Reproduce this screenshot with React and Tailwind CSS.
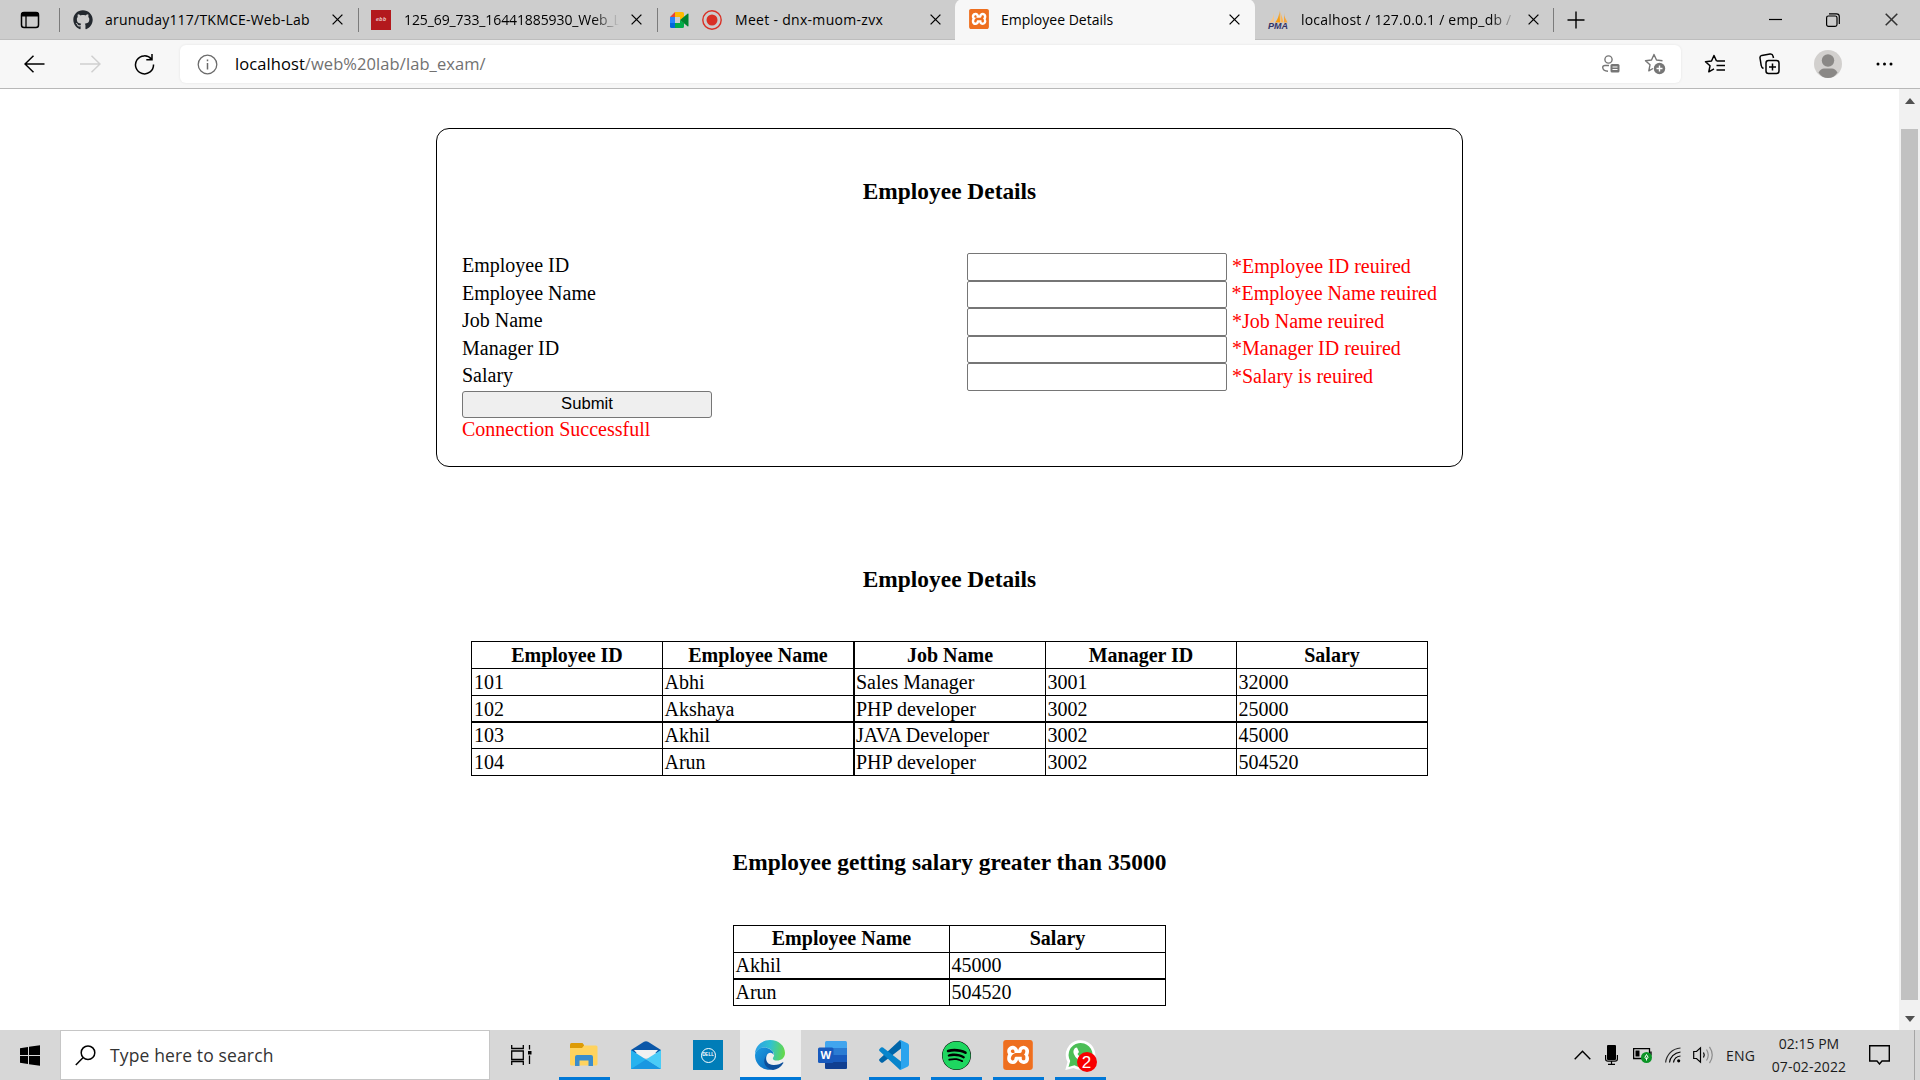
import React from "react";
import { FaGithub, FaSpotify } from "react-icons/fa";
import { SiXampp } from "react-icons/si";

const Svg = ({ w = 20, h = 20, className = "", children, vb }) => (
  <svg width={w} height={h} viewBox={vb || `0 0 ${w} ${h}`} fill="none" stroke="currentColor" className={`block shrink-0 ${className}`}>
    {children}
  </svg>
);

const Close = ({ s = 11, className = "" }) => (
  <Svg w={s} h={s} vb="0 0 11 11" className={className}>
    <path d="M.6 .6L10.4 10.4M10.4 .6L.6 10.4" strokeWidth="1.3" />
  </Svg>
);

const Xampp = ({ big }) => (
  <span className={big ? "block rounded-[5px] bg-white" : "block rounded-[3px] bg-white"}>
    <SiXampp size={big ? 30 : 20} color="#ee6f1f" className="block" />
  </span>
);

const MeetIcon = () => (
  <Svg w={19} h={16} className="mt-px">
    <g stroke="none">
      <path d="M0 5L5 0V5Z" fill="#e94335" />
      <path d="M5 0H12.500Q14 0 14 1.500V5L10 8V5H5Z" fill="#ffba00" />
      <path d="M0 5H5V11H0Z" fill="#2684fc" />
      <path d="M0 11H5V16H1.500Q0 16 0 14.500Z" fill="#0066da" />
      <path d="M5 11H10V8L14 11V14.500Q14 16 12.500 16H5Z" fill="#00ac47" />
      <path d="M10 8L17.500 1.800Q18.500 1.200 18.500 2.500V13.500Q18.500 14.800 17.500 14.200Z" fill="#00832d" />
    </g>
  </Svg>
);

const Pma = () => (
  <span className="flex h-5 w-5 flex-col items-center">
    <Svg w={20} h={13}>
      <g stroke="none">
        <path d="M6 2C6 7 4 10 1 12.500H6Z" fill="#f5c78d" />
        <path d="M11.500 0C11.500 5 9.500 10 7 12.500H12Z" fill="#f89c0e" />
        <path d="M12.500 1C13 6 15 8 15.500 12.500H12.500Z" fill="#fbb75a" />
        <path d="M16 3C16 7 18 9 19.500 12.500H16Z" fill="#f6a63a" />
      </g>
    </Svg>
    <span className="font-['Liberation_Sans'] text-[9px] leading-[7px] font-bold text-[#333366] italic">PMA</span>
  </span>
);

const Tab = ({ icon, title, active, sep, fade, first, track = "tracking-[-0.1px]" }) => (
  <div className={`flex h-10 w-[299px] shrink-0 items-center ${active ? "z-10 -ml-px h-[41px] w-[300px] rounded-t-lg bg-[#f7f7f7] pb-px" : ""}`}>
    <span className={`h-6 w-px shrink-0 ${sep ? "bg-[#7b7b7b]" : ""}`} />
    <span className={`flex shrink-0 items-center ${first || active ? "ml-[13px]" : "ml-3"}`}>{icon}</span>
    <span className={`flex-1 overflow-hidden text-[14px] whitespace-nowrap ${track} ${first || active ? "ml-3" : "ml-[13px]"} ${fade ? "[mask-image:linear-gradient(to_right,#000_88%,transparent)]" : ""}`}>{title}</span>
    <Close className={fade ? "mr-[15px] ml-3" : "mr-[15px]"} />
  </div>
);

function Browser() {
  return (
    <header className="font-['Open_Sans',sans-serif] text-black">
      <div className="flex h-10 items-center border-b border-[#bdbdbd] bg-[#cdcdcd]">
        <div className="flex w-[59px] justify-center">
          <Svg w={20} h={20}>
            <rect x="1.500" y="2.500" width="17" height="15" rx="2.500" strokeWidth="1.500" />
            <path d="M1.500 6V4.500Q1.500 2.500 3.500 2.500H16.500Q18.500 2.500 18.500 4.500V6Z" fill="currentColor" />
            <path d="M6 6V17.500" strokeWidth="1.300" />
          </Svg>
        </div>
        <Tab sep first track="tracking-[0.22px]" icon={<FaGithub size={20} color="#24292f" />} title="arunuday117/TKMCE-Web-Lab" />
        <Tab sep fade icon={<span className="flex h-5 w-5 items-center justify-center bg-[#b3191d] text-[6px] font-bold text-[#e3b5b5] italic">ebb</span>} title="125_69_733_16441885930_Web_L" />
        <Tab
          sep
          track="tracking-[0.3px]"
          icon={
            <span className="flex items-center gap-3.5">
              <MeetIcon />
              <Svg w={20} h={20} className="-ml-px text-[#d93025]"><circle cx="10" cy="10" r="9.200" strokeWidth="1.400" /><circle cx="10" cy="10" r="5.500" fill="currentColor" stroke="none" /></Svg>
            </span>
          }
          title="Meet - dnx-muom-zvx"
        />
        <Tab active track="tracking-normal" icon={<Xampp />} title="Employee Details" />
        <Tab fade track="tracking-[0.2px]" icon={<Pma />} title="localhost / 127.0.0.1 / emp_db / e" />
        <span className="-ml-px h-6 w-px bg-[#7b7b7b]" />
        <Svg w={18} h={18} className="ml-[13px]"><path d="M9 .5V17.500M.5 9H17.500" strokeWidth="1.400" /></Svg>
        <div className="ml-auto flex items-center">
          <Svg w={13} h={13} className="mr-[44px]"><path d="M0 6.500H13" strokeWidth="1.200" /></Svg>
          <Svg w={14} h={14} className="mr-[45px]"><rect x=".6" y="3" width="10.400" height="10.400" rx="1.800" strokeWidth="1.200" /><path d="M3 .8H10.500Q13.300 .8 13.300 3.600V11" strokeWidth="1.200" /></Svg>
          <Close s={13} className="mr-[22px] opacity-75" />
        </div>
      </div>
      <div className="flex h-[49px] items-center border-b border-[#b8b8b8] bg-[#f7f7f7]">
        <Svg w={21} h={18} className="ml-6"><path d="M20.500 9H1M9.500 .8L1 9L9.500 17.200" strokeWidth="1.500" /></Svg>
        <Svg w={21} h={18} className="ml-[35px] text-[#d0d0d0]"><path d="M0 9H19.500M11.500 .8L20 9L11.500 17.200" strokeWidth="1.500" /></Svg>
        <Svg w={21} h={21} className="ml-[33px]"><path d="M17.500 5.200A9 9 0 1 0 19.500 10.500M18 0V5.700H12.300" strokeWidth="1.500" /></Svg>
        <div className="ml-[25px] flex h-[38px] w-[1501px] items-center rounded-md bg-white shadow-[0_0_3px_rgba(0,0,0,0.08)]">
          <Svg w={21} h={21} className="ml-[17px] text-[#6b6b6b]"><circle cx="10.500" cy="10.500" r="9.300" strokeWidth="1.300" /><path d="M10.500 9V15.500M10.500 5.500V7.200" strokeWidth="1.500" /></Svg>
          <span className="ml-[17px] text-[16.5px] tracking-[0.08px] text-[#717171]"><span className="text-black">localhost</span>/web%20lab/lab_exam/</span>
          <Svg w={20} h={20} className="ml-auto text-[#767676]">
            <circle cx="7.500" cy="5.500" r="3.600" strokeWidth="1.400" />
            <path d="M8 11.500H4Q1.700 11.500 1.700 13.500Q2 17 7 17.300" strokeWidth="1.400" />
            <rect x="9.500" y="10" width="9" height="8.500" rx="1.500" fill="currentColor" stroke="none" />
            <path d="M11.500 13H16.500M11.500 15.500H16.500" stroke="#fff" strokeWidth="1.100" />
          </Svg>
          <Svg w={22} h={22} className="mr-[15px] ml-[23px] text-[#767676]">
            <path d="M18.500 7.700L12.500 7L10 1.500L7.500 7L1.500 7.700L6 11.800L4.800 17.800L9 15.500" strokeWidth="1.400" strokeLinejoin="round" />
            <circle cx="15.500" cy="15.500" r="5.700" fill="currentColor" stroke="none" />
            <path d="M15.500 12.500V18.500M12.500 15.500H18.500" stroke="#fff" strokeWidth="1.400" />
          </Svg>
        </div>
        <Svg w={22} h={20} className="ml-[23px]"><path d="M12.500 7L10 1.500L7.500 7L1.500 7.700L6 11.800L4.800 17.800L10 14.800" strokeWidth="1.500" strokeLinejoin="round" /><path d="M12.500 7H21M12.500 11.500H21M12.500 16H21" strokeWidth="1.500" /></Svg>
        <Svg w={21} h={22} className="ml-[33px]"><rect x="7" y="7.500" width="13" height="13" rx="2.500" strokeWidth="1.500" /><path d="M13.500 10.500V17.500M10 14H17" strokeWidth="1.500" /><path d="M4.500 15.500Q2.500 14.500 2.200 12.500L1 5Q.8 3 2.800 2.400L11 1Q13.500 .7 14 3L14.500 5" strokeWidth="1.500" /></Svg>
        <Svg w={28} h={28} className="ml-[34px]"><circle cx="14" cy="14" r="14" fill="#d2d0ce" stroke="none" /><circle cx="14" cy="10.500" r="6.200" fill="#8a8886" stroke="none" /><path d="M4.500 22.500Q7 18.500 10 18.500H18Q21 18.500 23.500 22.500Q20 28 14 28Q8 28 4.500 22.500Z" fill="#8a8886" stroke="none" /></Svg>
        <Svg w={17} h={4} className="ml-[34px]"><g fill="currentColor" stroke="none"><circle cx="2" cy="2" r="1.500" /><circle cx="8.500" cy="2" r="1.500" /><circle cx="15" cy="2" r="1.500" /></g></Svg>
      </div>
    </header>
  );
}

const fields = [
  ["Employee ID", "*Employee ID reuired", "h-[28px]"],
  ["Employee Name", "*Employee Name reuired", "h-[27px]"],
  ["Job Name", "*Job Name reuired", "h-[28px]"],
  ["Manager ID", "*Manager ID reuired", "h-[27px]"],
  ["Salary", "*Salary is reuired", "h-[28px]"],
];

const heads = ["Employee ID", "Employee Name", "Job Name", "Manager ID", "Salary"];
const rows = [
  ["101", "Abhi", "Sales Manager", "3001", "32000"],
  ["102", "Akshaya", "PHP developer", "3002", "25000"],
  ["103", "Akhil", "JAVA Developer", "3002", "45000"],
  ["104", "Arun", "PHP developer", "3002", "504520"],
];
const high = [["Akhil", "45000"], ["Arun", "504520"]];

const Title = ({ children, className }) => (
  <h3 className={`text-center text-[23.4px] leading-[27px] font-bold ${className}`}>{children}</h3>
);

function Page() {
  return (
    <main className="flex h-[941px] bg-white">
      <div className="flex w-[1899px] flex-col items-center font-['Liberation_Serif',serif] text-[20px] leading-[23px] text-black">
        <section className="mt-[39px] h-[339px] w-[1027px] rounded-[13px] border border-black px-[25px]">
          <Title className="mt-[49px] mb-[48px]">Employee Details</Title>
          {fields.map(([label, err, h]) => (
            <div key={label} className={`flex items-center ${h}`}>
              <span className="w-[505px] pb-[3px]">{label}</span>
              <input className="h-full w-[260px] rounded-[2px] border border-[#767676] bg-white" />
              <span className="ml-[5px] pb-[2px] whitespace-nowrap text-[#ff0000]">{err}</span>
            </div>
          ))}
          <button className="block h-[27px] w-[250px] rounded-[3px] border border-[#767676] bg-[#efefef] pb-[2px] font-['Liberation_Sans',sans-serif] text-[16.67px] leading-[23px]">Submit</button>
          <p className="text-[#ff0000]">Connection Successfull</p>
        </section>

        <Title className="mt-[99px]">Employee Details</Title>
        <div className="mt-[48px] grid grid-cols-[191px_191px_192px_191px_192px] grid-rows-[27px_27px_26px_27px_27px] border-b border-black">
          {heads.map((h, i) => (
            <div key={h} className={`border-t border-l border-black pt-[2px] text-center font-bold ${i === 2 ? "border-l-2" : ""} ${i === 4 ? "border-r" : ""}`}>{h}</div>
          ))}
          {rows.map((r, j) =>
            r.map((c, i) => (
              <div key={`${j}-${i}`} className={`border-black ${i === 2 ? "border-l-2 pl-px" : i === 0 ? "border-l pl-[2px]" : "border-l pl-[1.5px]"} ${j === 2 ? "border-t-2 pt-px" : j === 3 ? "border-t pt-[2px]" : "border-t pt-[1.5px]"} ${i === 4 ? "border-r" : ""}`}>{c}</div>
            ))
          )}
        </div>

        <Title className="mt-[73px]">Employee getting salary greater than 35000</Title>
        <div className="mt-[49px] grid grid-cols-[216px_217px] grid-rows-[27px_26px_27px] border-b border-black">
          {["Employee Name", "Salary"].map((h, i) => (
            <div key={h} className={`border-t border-l border-black pt-px text-center font-bold ${i ? "border-r" : ""}`}>{h}</div>
          ))}
          {high.map((r, j) =>
            r.map((c, i) => (
              <div key={c} className={`border-l border-black pl-[1.5px] ${j ? "border-t-2 pt-px" : "border-t pt-px"} ${i ? "border-r" : ""}`}>{c}</div>
            ))
          )}
        </div>
      </div>
      <div className="flex w-[21px] flex-col items-center bg-[#f1f1f1] pt-[9px] pb-[8px]">
        <Svg w={10} h={6}><path d="M0 6L5 0L10 6Z" fill="#505050" stroke="none" /></Svg>
        <div className="mt-[25px] h-[871px] w-[17px] bg-[#c1c1c1]" />
        <Svg w={10} h={6} className="mt-auto"><path d="M0 0L5 6L10 0Z" fill="#505050" stroke="none" /></Svg>
      </div>
    </main>
  );
}

const TaskButton = ({ children, on, active }) => (
  <div className="flex w-[62px] justify-center">
    <div className={`flex h-[50px] flex-col items-center ${active ? "w-[61px] bg-[#efefef]" : "w-[51px]"}`}>
      <div className="flex h-[47px] items-center justify-center pt-[3px]">{children}</div>
      {on && <div className="h-[3px] w-full bg-[#0078d7]" />}
    </div>
  </div>
);

function Taskbar() {
  return (
    <footer className="flex h-[50px] items-center bg-[#d7d7d7] font-['Open_Sans',sans-serif] text-[#1b1b1b]">
      <Svg w={20} h={21} className="ml-5"><g fill="#000" stroke="none"><path d="M0 3.200L8 2V10H0ZM9 1.800L20 .2V10H9ZM0 11H8V19L0 17.800ZM9 11H20V20.800L9 19.200Z" /></g></Svg>
      <div className="ml-5 flex h-full w-[430px] items-center border border-[#c6c6c6] bg-white">
        <Svg w={21} h={21} className="ml-[14px] text-black"><circle cx="13" cy="7.700" r="6.800" strokeWidth="1.500" /><path d="M8.200 12.500L.8 20" strokeWidth="1.500" /></Svg>
        <span className="ml-[14px] text-[17.5px] tracking-[0.13px] text-[#333]">Type here to search</span>
      </div>
      <div className="flex w-[63px] justify-center pr-px">
        <Svg w={21} h={20} className="text-black"><path d="M.7 0V3.500H12.300V0M.7 20V16.500H12.300V20M.7 6H12.300V14.500H.7ZM18.500 0V4.500M18.500 10.500V19" strokeWidth="1.300" /><rect x="17" y="6" width="3.500" height="3.500" fill="#000" stroke="none" /></Svg>
      </div>
      <TaskButton on>
        <Svg w={28} h={24}><g stroke="none"><path d="M0 1.500Q0 0 1.500 0H12.500L14 2V6H0Z" fill="#dd9b06" /><path d="M0 5H12L14 2.500H26Q27.500 2.500 27.500 4V21Q27.500 22.500 26 22.500H1.500Q0 22.500 0 21Z" fill="#ffd35e" /><path d="M5 23V14Q5 12 7 12H21Q23 12 23 14V23H18.500V17.500H9.500V23Z" fill="#3a8dcd" /></g></Svg>
      </TaskButton>
      <TaskButton>
        <Svg w={30} h={28}><g stroke="none"><path d="M0 9L13 .8Q15 -.4 17 .8L30 9V12H0Z" fill="#0b57a8" /><path d="M3 9H27L20 17H10Z" fill="#f1f1f1" /><path d="M0 9L30 28H0Z" fill="#26b2ef" /><path d="M30 9V28L15 18.500Z" fill="#4accf7" /><path d="M0 28L15 18.500L30 28Z" fill="#1997e1" /></g></Svg>
      </TaskButton>
      <TaskButton>
        <span className="flex size-[30px] items-center justify-center bg-[#007db8]"><span className="flex size-[15px] items-center justify-center rounded-full border border-white font-['Liberation_Sans'] text-[4.5px] leading-none font-bold text-white">DELL</span></span>
      </TaskButton>
      <TaskButton on active>
        <Svg w={30} h={30}>
          <defs>
            <linearGradient id="edgeTop" x1="0" y1=".4" x2="1" y2=".5"><stop offset="0" stopColor="#2b9fe6" /><stop offset=".5" stopColor="#31c2cf" /><stop offset="1" stopColor="#65d947" /></linearGradient>
            <linearGradient id="edgeLeft" x1="0" y1="0" x2="1" y2="1"><stop offset="0" stopColor="#1b9de2" /><stop offset="1" stopColor="#0a62b8" /></linearGradient>
          </defs>
          <g stroke="none">
            <path d="M0 14C0 6 7 0 15 0C24 0 30 6 30 13C30 18 26 20.500 22 20.500C18 20.500 17 18.500 18.500 17C20 15 19 11 14 8.500C8 6 2 9 0 14Z" fill="url(#edgeTop)" />
            <path d="M0 15C1 9 7 6.500 12 8C17 9.500 19 12.500 18.500 15C17 12 13 12 11.500 16C10 22 14 27 20 29C10 32 0 26 0 15Z" fill="url(#edgeLeft)" />
            <path d="M11.800 15C9 19 12 25.500 19 25C23 25 26 23.500 27.500 22.500C28.500 22 28.500 23 28 23.500C26 27 22 29.500 18 30C11 29 6 22 11.800 15Z" fill="#0d4f9b" />
          </g>
        </Svg>
      </TaskButton>
      <TaskButton>
        <Svg w={29} h={28}><g stroke="none"><rect x="7" width="22" height="28" rx="1.500" fill="#41a5ee" /><path d="M7 7H29V14H7Z" fill="#2b7cd3" /><path d="M7 14H29V21H7Z" fill="#185abd" /><path d="M7 21H29V26.500Q29 28 27.500 28H8.500Q7 28 7 26.500Z" fill="#103f91" /><rect y="6.500" width="15.500" height="15.500" rx="1.500" fill="#185abd" /></g><text x="7.700" y="18.300" textAnchor="middle" fill="#fff" stroke="none" className="font-['Open_Sans'] text-[11px] font-bold">W</text></Svg>
      </TaskButton>
      <TaskButton on>
        <Svg w={30} h={30}><g stroke="none"><path d="M22 .5V8.500L4 22.500Q3 23.200 2 22.500L.5 21Q-.3 20 .5 19L20 1Q21 0 22 .5Z" fill="#0065a9" /><path d="M22 29.500V21.500L4 7.500Q3 6.800 2 7.500L.5 9Q-.3 10 .5 11L20 29Q21 30 22 29.500Z" fill="#0785cc" /><path d="M22 .3L28.500 3.300Q30 4 30 5.500V24.500Q30 26 28.500 26.700L22 29.700Q20.500 30 20 29Q22 29.500 22 27.500V2.500Q22 .5 20 1Q20.500 0 22 .3Z" fill="#2ba4ee" /></g></Svg>
      </TaskButton>
      <TaskButton on>
        <span className="rounded-full bg-black"><FaSpotify size={29} color="#1ed760" className="block" /></span>
      </TaskButton>
      <TaskButton on><Xampp big /></TaskButton>
      <TaskButton on>
        <span className="relative block">
          <Svg w={31} h={30}>
            <path d="M.3 30L2.500 22A14.800 14.800 0 1 1 8.500 28Z" fill="#fff" stroke="none" />
            <path d="M3.500 27L5.200 21A12 12 0 1 1 9.500 25.300Z" fill="#4cbe56" stroke="none" />
            <path d="M10 8L12 7.500L14 12L12.500 14Q14 17 17.500 18.500L19.500 17L23 19Q22.500 22 19 22Q14 21.500 10.500 17Q6.500 11.500 10 8Z" fill="#fff" stroke="none" />
          </Svg>
          <span className="absolute top-[12px] left-[12px] flex size-5 items-center justify-center rounded-full bg-[#f80000] font-['Liberation_Sans',sans-serif] text-[17px] leading-none text-white">2</span>
        </span>
      </TaskButton>
      <Svg w={17} h={10} className="ml-auto text-black"><path d="M.7 9.300L8.500 1.200L16.300 9.300" strokeWidth="1.400" /></Svg>
      <Svg w={13} h={20} className="ml-[14px] text-black"><rect x="2" width="9" height="15" rx="1" fill="#000" stroke="none" /><path d="M.6 10V14Q.6 16.200 3 16.200H10Q12.400 16.200 12.400 14V10M6.500 16V19.300M3 19.300H10" strokeWidth="1.200" /></Svg>
      <Svg w={20} h={16} className="ml-[15px] text-black"><path d="M.6 1.600H16.500V11.500H.6ZM18 4.500V8.500" strokeWidth="1.300" /><rect x="2.500" y="3.500" width="4" height="6" fill="#000" stroke="none" /><circle cx="13.500" cy="10.500" r="5.500" fill="#0c9527" stroke="none" /><path d="M13.500 13.500V10.500M13.500 7.500L15.200 10.500L13.500 12L11.800 10.500Z" stroke="#fff" strokeWidth="1" /></Svg>
      <Svg w={16} h={16} className="ml-[12px] text-black"><path d="M.6 15.500C1.500 8 7 1.500 15.500 1" strokeWidth="1.200" opacity=".8" /><path d="M4.500 15.500C5 10.500 9 5.800 15.500 5M8.500 15.500C9 12.500 11 9.500 15.500 9" strokeWidth="1.200" /><circle cx="13.700" cy="13.800" r="1.600" fill="#000" stroke="none" /></Svg>
      <Svg w={21} h={18} className="ml-[12px] text-black"><path d="M.7 5.500H3.500L7.500 1.800V16.200L3.500 12.500H.7Z" strokeWidth="1.200" /><path d="M10.500 6.500Q12 9 10.500 11.500" strokeWidth="1.200" /><path d="M13.500 3.500Q17 9 13.500 14.500M16.500 .8Q22 9 16.500 17.200" strokeWidth="1.200" opacity=".35" /></Svg>
      <span className="ml-[12px] w-[29px] text-[14px] tracking-[0.2px]">ENG</span>
      <div className="ml-[12px] w-[84px] text-center text-[14px] leading-[23px] whitespace-nowrap">
        <div>02:15 PM</div>
        <div className="tracking-[0.15px]">07-02-2022</div>
      </div>
      <Svg w={21} h={20} className="ml-[18px] text-black"><path d="M.7 .7H20.300V16H13L10.500 19L8 16H.7Z" strokeWidth="1.400" /></Svg>
      <div className="mr-[5px] ml-[24px] h-full w-px bg-[#a5a5a5]" />
    </footer>
  );
}

export default function App() {
  return (
    <div className="flex h-[1080px] w-[1920px] flex-col overflow-hidden bg-white">
      <Browser />
      <Page />
      <Taskbar />
    </div>
  );
}
